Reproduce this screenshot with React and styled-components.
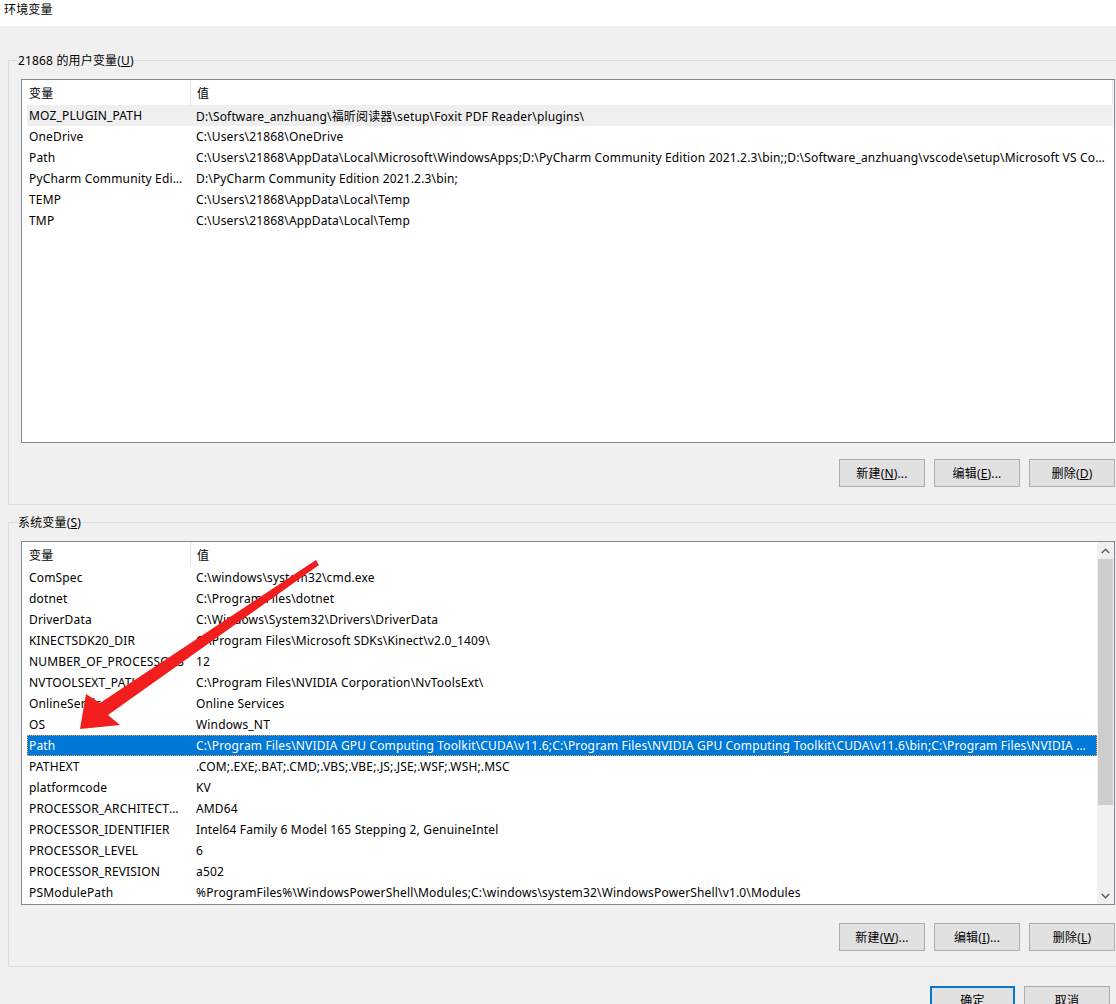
import React from 'react';
import styled, { createGlobalStyle } from 'styled-components';

const GlobalStyle = createGlobalStyle`
  html, body {
    margin: 0;
    padding: 0;
    background: #f0f0f0;
    overflow: hidden;
  }
  body {
    font-family: 'Noto Sans', 'Noto Sans CJK SC', sans-serif;
    font-size: 12px;
    letter-spacing: 0.16px;
    color: #000;
  }
`;

const userVars = [
  ['MOZ_PLUGIN_PATH', 'D:\\Software_anzhuang\\福昕阅读器\\setup\\Foxit PDF Reader\\plugins\\'],
  ['OneDrive', 'C:\\Users\\21868\\OneDrive'],
  ['Path', 'C:\\Users\\21868\\AppData\\Local\\Microsoft\\WindowsApps;D:\\PyCharm Community Edition 2021.2.3\\bin;;D:\\Software_anzhuang\\vscode\\setup\\Microsoft VS Code\\bin'],
  ['PyCharm Community Edition', 'D:\\PyCharm Community Edition 2021.2.3\\bin;'],
  ['TEMP', 'C:\\Users\\21868\\AppData\\Local\\Temp'],
  ['TMP', 'C:\\Users\\21868\\AppData\\Local\\Temp'],
];

const systemVars = [
  ['ComSpec', 'C:\\windows\\system32\\cmd.exe'],
  ['dotnet', 'C:\\Program Files\\dotnet'],
  ['DriverData', 'C:\\Windows\\System32\\Drivers\\DriverData'],
  ['KINECTSDK20_DIR', 'C:\\Program Files\\Microsoft SDKs\\Kinect\\v2.0_1409\\'],
  ['NUMBER_OF_PROCESSORS', '12'],
  ['NVTOOLSEXT_PATH', 'C:\\Program Files\\NVIDIA Corporation\\NvToolsExt\\'],
  ['OnlineServices', 'Online Services'],
  ['OS', 'Windows_NT'],
  ['Path', 'C:\\Program Files\\NVIDIA GPU Computing Toolkit\\CUDA\\v11.6;C:\\Program Files\\NVIDIA GPU Computing Toolkit\\CUDA\\v11.6\\bin;C:\\Program Files\\NVIDIA Corporation\\Nsight Compute'],
  ['PATHEXT', '.COM;.EXE;.BAT;.CMD;.VBS;.VBE;.JS;.JSE;.WSF;.WSH;.MSC'],
  ['platformcode', 'KV'],
  ['PROCESSOR_ARCHITECTURE', 'AMD64'],
  ['PROCESSOR_IDENTIFIER', 'Intel64 Family 6 Model 165 Stepping 2, GenuineIntel'],
  ['PROCESSOR_LEVEL', '6'],
  ['PROCESSOR_REVISION', 'a502'],
  ['PSModulePath', '%ProgramFiles%\\WindowsPowerShell\\Modules;C:\\windows\\system32\\WindowsPowerShell\\v1.0\\Modules'],
];

// Layout
const Page = styled.div`
  position: relative;
  width: 1136px;
  height: 1004px;
  overflow: hidden;
`;

const TitleBar = styled.div`
  height: 26px;
  background: #fff;
  padding-left: 4px;
  line-height: 20px;
  box-sizing: border-box;
`;

const Content = styled.div`
  padding: 0 8px;
`;

const Group = styled.div`
  position: relative;
  border: 1px solid #dcdcdc;
  padding: 18px 12px ${p => p.$bottom}px 12px;
  margin-top: ${p => p.$top}px;
`;

const Legend = styled.span`
  position: absolute;
  top: -9px;
  left: 8px;
  padding: 0 1px;
  background: #f0f0f0;
  line-height: 18px;
`;

const ListBox = styled.div`
  display: flex;
  height: 364px;
  box-sizing: border-box;
  border: 1px solid #828790;
  background: #fff;
  overflow: hidden;
`;

const ListMain = styled.div`
  flex: 1;
  min-width: 0;
  display: flex;
  flex-direction: column;
`;

const Header = styled.div`
  display: flex;
  height: 25px;
  flex-shrink: 0;
  margin-right: ${p => (p.$scroll ? 0 : 1)}px;
`;

const HeadCell = styled.div`
  display: flex;
  align-items: center;
  box-sizing: border-box;
  border-right: 1px solid #e5e5e5;
  padding-left: ${p => p.$pad}px;
  ${p => (p.$width ? `width: ${p.$width}px; flex-shrink: 0;` : 'flex: 1;')}
  ${p => p.$noline && 'border-right: none;'}
`;

const Row = styled.div`
  display: flex;
  align-items: center;
  height: 21px;
  flex-shrink: 0;
  margin-left: 5px;
  margin-right: ${p => (p.$scroll ? 0 : 1)}px;
  box-sizing: border-box;
  background: ${p => (p.$selected ? '#0078d7' : p.$hover ? '#efefef' : 'transparent')};
  color: ${p => (p.$selected ? '#fff' : '#000')};
  border: 1px dotted ${p => (p.$selected ? '#f3a041' : 'transparent')};
`;

const NameCell = styled.div`
  width: 161px;
  flex-shrink: 0;
  padding-left: 1px;
  padding-right: 3px;
  box-sizing: border-box;
  white-space: nowrap;
  overflow: hidden;
  text-overflow: ellipsis;
`;

const ValueCell = styled.div`
  flex: 1;
  min-width: 0;
  padding-left: 7px;
  padding-right: 5px;
  white-space: nowrap;
  overflow: hidden;
  text-overflow: ellipsis;
`;

const ScrollBar = styled.div`
  width: 17px;
  flex-shrink: 0;
  background: #f0f0f0;
  display: flex;
  flex-direction: column;
  align-items: center;
`;

const ScrollArrow = styled.div`
  height: 17px;
  width: 17px;
  display: flex;
  align-items: center;
  justify-content: center;
  flex-shrink: 0;
`;

const Track = styled.div`
  flex: 1;
  width: 15px;
  display: flex;
  flex-direction: column;
`;

const Thumb = styled.div`
  height: 246px;
  background: #cdcdcd;
`;

const ButtonRow = styled.div`
  display: flex;
  justify-content: flex-end;
  gap: ${p => p.$gap || 9}px;
  margin-top: ${p => p.$top}px;
  margin-right: ${p => p.$right || 0}px;
`;

const Button = styled.button`
  width: ${p => p.$w || 86}px;
  height: 28px;
  box-sizing: border-box;
  background: #e1e1e1;
  border: ${p => (p.$default ? '2px solid #0078d7' : '1px solid #adadad')};
  font-family: inherit;
  font-size: 12px;
  letter-spacing: 0.16px;
  color: #000;
  padding: 0;
  margin: 0;
`;

const Arrow = styled.svg`
  position: absolute;
  left: 0;
  top: 0;
  pointer-events: none;
`;

function VarList({ rows, scroll, selected, hover }) {
  return (
    <ListBox>
      <ListMain>
        <Header $scroll={scroll}>
          <HeadCell $width={169} $pad={7}>变量</HeadCell>
          <HeadCell $pad={6} $noline={scroll}>值</HeadCell>
        </Header>
        {rows.map(([name, value], i) => (
          <Row key={name + i} $scroll={scroll} $selected={i === selected} $hover={i === hover}>
            <NameCell>{name}</NameCell>
            <ValueCell>{value}</ValueCell>
          </Row>
        ))}
      </ListMain>
      {scroll && (
        <ScrollBar>
          <ScrollArrow>
            <svg width="9" height="6" viewBox="0 0 9 6">
              <polyline points="0.8,5 4.5,1.3 8.2,5" fill="none" stroke="#606060" strokeWidth="1.6" />
            </svg>
          </ScrollArrow>
          <Track>
            <Thumb />
          </Track>
          <ScrollArrow>
            <svg width="9" height="6" viewBox="0 0 9 6">
              <polyline points="0.8,1 4.5,4.7 8.2,1" fill="none" stroke="#606060" strokeWidth="1.6" />
            </svg>
          </ScrollArrow>
        </ScrollBar>
      )}
    </ListBox>
  );
}

function App() {
  return (
    <Page>
      <GlobalStyle />
      <TitleBar>环境变量</TitleBar>
      <Content>
        <Group $top={34} $bottom={17}>
          <Legend>21868 的用户变量(<u>U</u>)</Legend>
          <VarList rows={userVars} hover={0} />
          <ButtonRow $top={16}>
            <Button>新建(<u>N</u>)...</Button>
            <Button>编辑(<u>E</u>)...</Button>
            <Button>删除(<u>D</u>)</Button>
          </ButtonRow>
        </Group>
        <Group $top={17} $bottom={15}>
          <Legend>系统变量(<u>S</u>)</Legend>
          <VarList rows={systemVars} scroll selected={8} />
          <ButtonRow $top={18}>
            <Button>新建(<u>W</u>)...</Button>
            <Button>编辑(<u>I</u>)...</Button>
            <Button>删除(<u>L</u>)</Button>
          </ButtonRow>
        </Group>
        <ButtonRow $top={19} $right={18} $gap={9}>
          <Button $default $w={85}>确定</Button>
          <Button $w={86}>取消</Button>
        </ButtonRow>
      </Content>
      <Arrow width="1136" height="1004" viewBox="0 0 1136 1004">
        <polygon
          points="80,729 86,694 100,703 316,560 319,565 108,715 120,725"
          fill="#f21d1d"
        />
      </Arrow>
    </Page>
  );
}

export default App;
